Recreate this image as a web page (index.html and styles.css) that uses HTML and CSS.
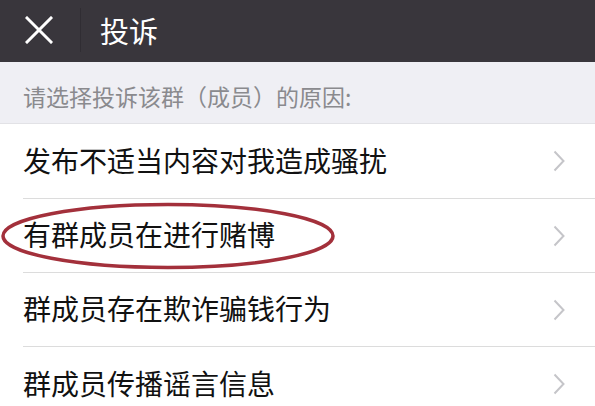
FILE: index.html
```html
<!DOCTYPE html>
<html lang="zh-CN">
<head>
    <meta charset="UTF-8">
    <meta name="viewport" content="width=device-width, initial-scale=1.0">
    <title>投诉</title>
    <link rel="stylesheet" href="styles.css">
</head>
<body>
    <div class="header">
        <a href="#" class="close-btn" aria-label="关闭">
            <svg width="28" height="28" viewBox="0 0 28 28">
                <path d="M2 2 L26 26 M26 2 L2 26" stroke="#fff" stroke-width="3" stroke-linecap="square" fill="none"/>
            </svg>
        </a>
        <div class="divider"></div>
        <div class="title">投诉</div>
    </div>

    <div class="section-label">请选择投诉该群（成员）的原因:</div>

    <ul class="reason-list">
        <li class="reason-item">
            <span>发布不适当内容对我造成骚扰</span>
            <svg class="chevron" width="12" height="22" viewBox="0 0 12 22"><path d="M1.5 1.5 L10.5 11 L1.5 20.5" stroke="#c5c5c9" stroke-width="2" fill="none"/></svg>
        </li>
        <li class="reason-item">
            <span>有群成员在进行赌博</span>
            <svg class="chevron" width="12" height="22" viewBox="0 0 12 22"><path d="M1.5 1.5 L10.5 11 L1.5 20.5" stroke="#c5c5c9" stroke-width="2" fill="none"/></svg>
            <!-- red circle drawn on the screenshot -->
            <svg class="mark" width="336" height="72" viewBox="0 0 336 72">
                <ellipse cx="168" cy="36" rx="165" ry="31.5" fill="none" stroke="#a3303b" stroke-width="3.5"/>
            </svg>
        </li>
        <li class="reason-item">
            <span>群成员存在欺诈骗钱行为</span>
            <svg class="chevron" width="12" height="22" viewBox="0 0 12 22"><path d="M1.5 1.5 L10.5 11 L1.5 20.5" stroke="#c5c5c9" stroke-width="2" fill="none"/></svg>
        </li>
        <li class="reason-item">
            <span>群成员传播谣言信息</span>
            <svg class="chevron" width="12" height="22" viewBox="0 0 12 22"><path d="M1.5 1.5 L10.5 11 L1.5 20.5" stroke="#c5c5c9" stroke-width="2" fill="none"/></svg>
        </li>
    </ul>
</body>
</html>
```

FILE: styles.css
```css
* {
    margin: 0;
    padding: 0;
    box-sizing: border-box;
}
body {
    font-family: "Noto Sans CJK SC", "Noto Sans", sans-serif;
    background: #fff;
    color: #111;
    overflow: hidden;
}
.header {
    height: 62px;
    background: #39363c;
    display: flex;
    align-items: center;
    padding-left: 25px;
    padding-bottom: 2px;
}
.close-btn {
    display: flex;
    width: 28px;
    height: 28px;
}
.divider {
    width: 1px;
    height: 44px;
    background: #302d33;
    margin-left: 27px;
    margin-right: 19px;
}
.title {
    font-size: 29px;
    color: #fff;
    line-height: 1;
}
.section-label {
    background: #efeff4;
    height: 62px;
    padding: 23px 0 0 23px;
    font-size: 23px;
    line-height: 1;
    color: #8a8a8e;
    border-bottom: 1px solid #e2e2e6;
}
.reason-list {
    list-style: none;
    padding-left: 23px;
}
.reason-item {
    position: relative;
    height: 74px;
    display: flex;
    align-items: center;
    justify-content: space-between;
    padding-right: 30px;
    padding-bottom: 3px;
    font-size: 28px;
    line-height: 1;
    border-bottom: 1px solid #dcdcdc;
}
.reason-item:first-child {
    height: 75px;
}
.reason-item:last-child {
    border-bottom: none;
}
.chevron {
    flex-shrink: 0;
    margin-top: 3px;
}
.mark {
    position: absolute;
    left: -23px;
    top: 1px;
}
```
